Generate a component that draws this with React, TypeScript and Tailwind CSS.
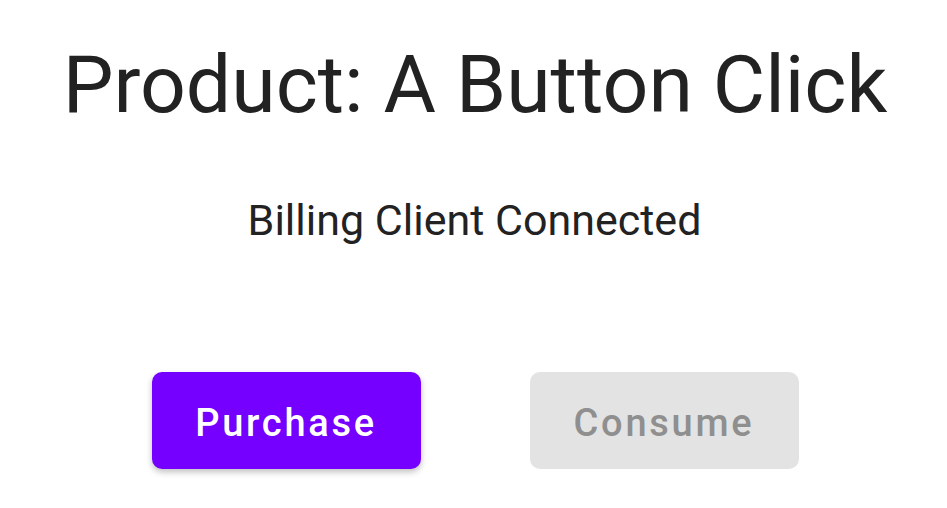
export default function App() {
  return (
    <div className="flex h-[508px] w-[947px] flex-col items-center bg-white font-['Roboto',sans-serif]">
      <h1 className="mt-[44px] ml-[3px] text-[80.5px] leading-[81px] font-normal text-[#222222]">
        Product: A Button Click
      </h1>
      <p className="mt-[74px] ml-[2px] text-[43px] leading-[43px] text-[#222222]">Billing Client Connected</p>
      <div className="mt-[130px] ml-[3px] flex gap-[109px]">
        <button className="h-[97px] w-[269px] rounded-[10px] bg-[#7600ff] pt-[5px] text-[38px] font-medium tracking-[0.072em] text-white shadow-[0_3px_6px_rgba(0,0,0,0.25)]">
          Purchase
        </button>
        <button className="h-[97px] w-[269px] rounded-[10px] bg-[#e3e3e3] pt-[5px] text-[38px] font-medium tracking-[0.072em] text-[#8f8f8f]">
          Consume
        </button>
      </div>
    </div>
  );
}
